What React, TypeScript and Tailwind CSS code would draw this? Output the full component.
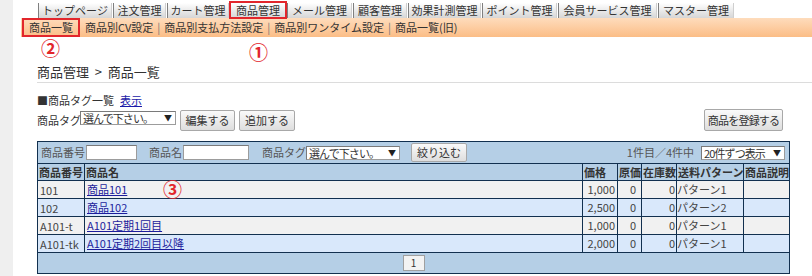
import React from 'react';

const tabs = [
  { label: 'トップページ', w: 'w-[74px]' },
  { label: '注文管理', w: 'w-[53px]' },
  { label: 'カート管理', w: 'w-[62px]' },
  { label: '商品管理', w: 'w-[56px]', active: true },
  { label: 'メール管理', w: 'w-[65px]' },
  { label: '顧客管理', w: 'w-[54px]' },
  { label: '効果計測管理', w: 'w-[73px]' },
  { label: 'ポイント管理', w: 'w-[75px]' },
  { label: '会員サービス管理', w: 'w-[99px]' },
  { label: 'マスター管理', w: 'w-[76px]' },
];

const subNav = ['商品別CV設定', '商品別支払方法設定', '商品別ワンタイム設定', '商品一覧(旧)'];

const products = [
  { code: '101', name: '商品101', price: '1,000', cost: '0', stock: '0', ship: 'パターン1' },
  { code: '102', name: '商品102', price: '2,500', cost: '0', stock: '0', ship: 'パターン2' },
  { code: 'A101-t', name: 'A101定期1回目', price: '1,000', cost: '0', stock: '0', ship: 'パターン1' },
  { code: 'A101-tk', name: 'A101定期2回目以降', price: '2,000', cost: '0', stock: '0', ship: 'パターン1' },
];

const btn =
  'flex items-center justify-center bg-linear-to-b from-[#fafafa] to-[#dedede] border border-[#a8a8a8] rounded-[2px] text-[#333]';

const FakeSelect = ({ label, className }: { label: string; className: string }) => (
  <div
    className={`flex items-center justify-between bg-white border border-[#9c9c9c] border-t-[#7a7a7a] border-l-[#7a7a7a] h-[14px] pl-[2px] pr-[3px] leading-[12px] ${className}`}
  >
    <span className="tracking-[-0.9px] whitespace-nowrap">{label}</span>
    <span className="text-[8px] text-[#222]">▼</span>
  </div>
);

export default function App() {
  return (
    <div className="relative flex w-[812px] h-[276px] overflow-hidden bg-white text-[11px] text-[#333] font-['Noto_Sans_CJK_JP','Noto_Sans',sans-serif]">
      <div className="w-[13px] shrink-0 bg-[#efefef]" />

      <div className="flex-1 flex flex-col">
        {/* main tabs */}
        <div className="flex gap-[1px] pl-[25px] mt-[3px] h-[15px]">
          {tabs.map((t) => (
            <div
              key={t.label}
              className={`relative ${t.w} h-[15px] flex items-center justify-center leading-[13px] whitespace-nowrap border-l border-[#7f7f7f] border-r border-r-[#cfcfcf] bg-linear-to-b from-white to-[#d6d6d6] text-[#333]`}
            >
              {t.label}
              {t.active && (
                <span className="absolute -left-[2px] -right-[2px] -top-[2px] -bottom-[1px] border-2 border-[#e2262c]" />
              )}
            </div>
          ))}
        </div>

        {/* sub navigation */}
        <div className="ml-[8px] h-[19px] flex items-center bg-linear-to-b from-[#fedcbc] to-[#fbbd86] text-[#333]">
          <div className="ml-[1px] w-[58px] h-[19px] flex items-center justify-center border-2 border-[#e2262c] leading-[13px]">
            商品一覧
          </div>
          {subNav.map((s, i) => (
            <React.Fragment key={s}>
              {i > 0 && <span className="mx-[4px] text-[#777]">|</span>}
              <span className={`leading-[13px] whitespace-nowrap ${i === 0 ? 'ml-[5px]' : ''}`}>{s}</span>
            </React.Fragment>
          ))}
        </div>

        {/* title */}
        <div className="ml-[24px] mt-[27px] h-[19px] leading-[16px] text-[13px] text-[#333] border-b border-[#dcdcdc] whitespace-pre">
          {'商品管理  >  商品一覧'}
        </div>

        <div className="pl-[24px] pr-[23px] flex flex-col">
          <div className="mt-[10px] h-[14px] leading-[14px] flex items-center">
            <span>■商品タグ一覧</span>
            <span className="ml-[6px] text-[#1a1aa8] underline">表示</span>
          </div>

          <div className="mt-[2px] h-[22px] flex items-center">
            <span className="w-[43px] whitespace-nowrap">商品タグ</span>
            <FakeSelect label="選んで下さい。" className="w-[96px] -mt-[4px]" />
            <div className={`${btn} ml-[4px] w-[55px] h-[21px]`}>編集する</div>
            <div className={`${btn} ml-[4px] w-[56px] h-[21px]`}>追加する</div>
            <div className={`${btn} ml-auto mr-[7px] w-[79px] h-[22px] tracking-[-0.8px]`}>商品を登録する</div>
          </div>

          {/* product table */}
          <table className="mt-[10px] w-[752px] table-fixed border-collapse border border-[#12304f] bg-[#b5cfe6]">
            <colgroup>
              <col className="w-[47px]" />
              <col className="w-[498px]" />
              <col className="w-[35px]" />
              <col className="w-[24px]" />
              <col className="w-[35px]" />
              <col className="w-[67px]" />
              <col className="w-[46px]" />
            </colgroup>
            <tbody>
              <tr>
                <td colSpan={7} className="h-[21px] p-0 border-b border-[#12304f]">
                  <div className="flex items-center h-[21px] pl-[3px] pr-[4px] text-[#555]">
                    <span className="whitespace-nowrap">商品番号</span>
                    <div className="ml-[1px] w-[51px] h-[15px] bg-white border border-[#9c9c9c] border-t-[#7a7a7a]" />
                    <span className="ml-[12px] whitespace-nowrap">商品名</span>
                    <div className="ml-[1px] w-[66px] h-[15px] bg-white border border-[#9c9c9c] border-t-[#7a7a7a]" />
                    <span className="ml-[13px] whitespace-nowrap">商品タグ</span>
                    <FakeSelect label="選んで下さい。" className="w-[94px] text-[#333]" />
                    <div className={`${btn} ml-[11px] w-[56px] h-[19px]`}>絞り込む</div>
                    <span className="ml-auto whitespace-nowrap">1件目／4件中</span>
                    <FakeSelect label="20件ずつ表示" className="ml-[7px] w-[84px] text-[#333]" />
                  </div>
                </td>
              </tr>
              <tr className="font-bold text-[#333]">
                {['商品番号', '商品名', '価格', '原価', '在庫数', '送料パターン', '商品説明'].map((h) => (
                  <td
                    key={h}
                    className="h-[17px] p-0 pl-[1px] leading-[15px] border border-[#12304f] whitespace-nowrap overflow-hidden"
                  >
                    {h}
                  </td>
                ))}
              </tr>
              {products.map((p, i) => (
                <tr key={p.code} className={i % 2 === 0 ? 'bg-[#f1f1f1]' : 'bg-[#d9e8fb]'}>
                  <td className="h-[18px] p-0 pl-[2px] leading-[16px] border border-[#12304f] text-[#444] whitespace-nowrap">
                    {p.code}
                  </td>
                  <td className="p-0 pl-[2px] border border-[#12304f] whitespace-nowrap">
                    <span className="text-[#1c1c9c] underline">{p.name}</span>
                  </td>
                  <td className="p-0 pr-[2px] text-right border border-[#12304f] text-[#444]">{p.price}</td>
                  <td className="p-0 pr-[5px] text-right border border-[#12304f] text-[#444]">{p.cost}</td>
                  <td className="p-0 pr-[1px] text-right border border-[#12304f] text-[#444]">{p.stock}</td>
                  <td className="p-0 border border-[#12304f] text-[#444] whitespace-nowrap">{p.ship}</td>
                  <td className="p-0 border border-[#12304f]" />
                </tr>
              ))}
              <tr>
                <td colSpan={7} className="h-[20px] p-0 border border-[#12304f]">
                  <div className="flex justify-center items-center h-[20px]">
                    <div className="w-[22px] h-[16px] flex items-center justify-center bg-[#f3f3f3] border border-[#a0a0a0] text-[10px] leading-[12px]">
                      1
                    </div>
                  </div>
                </td>
              </tr>
            </tbody>
          </table>
        </div>
      </div>

      {/* annotation markers */}
      <span className="absolute left-[41px] top-[38px] text-[19px] font-bold leading-[20px] text-[#e2262c]">②</span>
      <span className="absolute left-[249px] top-[42px] text-[19px] font-bold leading-[20px] text-[#e2262c]">①</span>
      <span className="absolute left-[163px] top-[179px] text-[19px] font-bold leading-[20px] text-[#e2262c]">③</span>
    </div>
  );
}
